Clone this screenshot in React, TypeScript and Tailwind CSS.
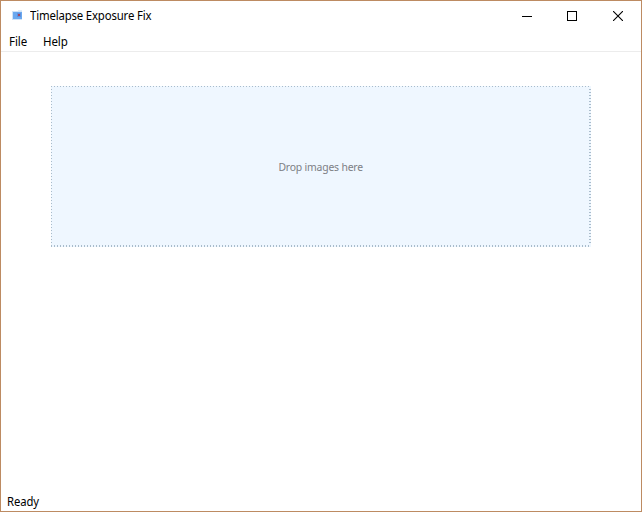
import React from "react";

function TitleBar() {
  return (
    <header className="flex h-[30px] items-center justify-between">
      <div className="flex items-center pl-[11px]">
        <svg className="-mt-[3px]" width="11" height="10" viewBox="0 0 11 10" shapeRendering="crispEdges">
          <rect x="0" y="1" width="10" height="9" fill="#cfe3f8" />
          <rect x="6" y="0" width="4" height="1" fill="#dcebfa" />
          <rect x="1" y="2" width="9" height="7" fill="#6aa8ef" />
          <rect x="5" y="3" width="4" height="4" fill="#5f8fdc" />
          <rect x="6" y="4" width="2" height="2" fill="#a3485f" />
        </svg>
        <h1 className="ml-[7px] origin-left scale-x-[0.948] whitespace-nowrap text-[12px] leading-4 tracking-[-0.17px]">Timelapse Exposure Fix</h1>
      </div>
      <div className="flex">
        <button aria-label="Minimize" className="flex h-[29px] w-[45px] items-center justify-center">
          <svg width="10" height="11" shapeRendering="crispEdges"><path d="M0 5.5H10" stroke="#000" /></svg>
        </button>
        <button aria-label="Maximize" className="flex h-[29px] w-[45px] items-center justify-center">
          <svg width="10" height="10" shapeRendering="crispEdges"><rect x=".5" y=".5" width="9" height="9" fill="none" stroke="#000" /></svg>
        </button>
        <button aria-label="Close" className="flex h-[29px] w-[47px] items-center justify-center">
          <svg width="10" height="10"><path d="M0 0L10 10M10 0L0 10" stroke="#000" strokeWidth="1.1" /></svg>
        </button>
      </div>
    </header>
  );
}

export default function App() {
  return (
    <div className="flex h-[512px] w-[642px] flex-col border border-[#bd8b62] bg-white font-['Noto_Sans','Open_Sans',sans-serif] text-[12px] text-black">
      <TitleBar />
      <nav className="flex h-[21px] items-center border-b border-[#ececec] pt-[2px] pl-[8px] leading-4">
        <span className="w-[34px] origin-left scale-x-[0.96] tracking-[-0.1px]">File</span>
        <span className="origin-left scale-x-[0.96] tracking-[-0.1px]">Help</span>
      </nav>
      <main className="flex-1 px-[50px] pt-[34px]">
        <div className="flex h-[161px] w-[540px] flex-col bg-[#eff7ff]">
          <div className="h-px bg-[repeating-linear-gradient(90deg,#a9bccb_0px_1px,transparent_1px_3px)]" />
          <div className="flex flex-1">
            <div className="w-px bg-[repeating-linear-gradient(180deg,transparent_0px_2px,#a9bccb_2px_3px)]" />
            <div className="flex flex-1 items-center justify-center pt-[2px] text-[11px] text-[#7d8085]">
              <span className="scale-x-[0.945] whitespace-nowrap tracking-[-0.2px]">Drop images here</span>
            </div>
            <div className="w-[2px] bg-[repeating-linear-gradient(180deg,transparent_0px_2px,#a9bccb_2px_3px)]" />
          </div>
          <div className="h-[2px] bg-[repeating-linear-gradient(90deg,#a9bccb_0px_1px,transparent_1px_3px)]" />
        </div>
      </main>
      <footer className="flex h-[20px] items-center pt-[2px] pl-[6px] leading-4">
        <span className="origin-left scale-x-[0.94] tracking-[-0.1px]">Ready</span>
      </footer>
    </div>
  );
}
